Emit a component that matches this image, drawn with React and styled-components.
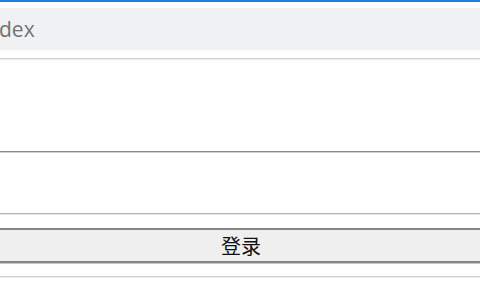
import React from "react";
import styled, { createGlobalStyle } from "styled-components";

const Global = createGlobalStyle`
  html, body { margin: 0; padding: 0; background: #ffffff; overflow: hidden; }
  body { width: 480px; height: 300px; font-family: "Open Sans", "Noto Sans CJK SC", sans-serif; }
`;

const Page = styled.div`
  display: flex;
  flex-direction: column;
  width: 480px;
  height: 300px;
  overflow: hidden;
`;

const AccentBar = styled.div`
  height: 2px;
  background: #1a7fe0;
  flex: none;
`;

const Header = styled.div`
  margin-top: 6px;
  height: 42px;
  background: #f0f1f3;
  display: flex;
  align-items: center;
  color: #727272;
  font-size: 21px;
  flex: none;
  border-bottom: 1px solid #fbfbfb;
`;

const HeaderText = styled.span`
  margin-left: -1px;
`;

const Rule = styled.div`
  margin: ${(p) => p.$top}px -20px 0;
  height: 1px;
  background: #d2d2d2;
  box-shadow: 0 1px 0 #ececec;
  flex: none;
`;

const Field = styled.div`
  margin: ${(p) => p.$top}px -20px 0;
  height: ${(p) => p.$h}px;
  border-top: 1px solid #8c8c8c;
  border-bottom: 1px solid #b4b4b4;
  box-shadow: inset 0 1px 0 #cfcfcf, 0 1px 0 #e6e6e6;
  background: #ffffff;
  flex: none;
`;

const Button = styled.button`
  margin: ${(p) => p.$top}px -20px 0;
  height: 35px;
  flex: none;
  border: none;
  border-top: 2px solid #858585;
  border-bottom: 2px solid #858585;
  box-shadow: 0 1px 0 #c9c9c9;
  background: #efefef;
  font-family: "Noto Sans CJK SC", sans-serif;
  font-size: 20px;
  color: #111111;
  padding: 0 0 0 2px;
  line-height: 30px;
`;

export default function App() {
  return (
    <>
      <Global />
      <Page>
        <AccentBar />
        <Header>
          <HeaderText>dex</HeaderText>
        </Header>
        <Rule $top={7} />
        <Field $top={92} $h={61} />
        <Button $top={14}>登录</Button>
        <Rule $top={13} />
      </Page>
    </>
  );
}
